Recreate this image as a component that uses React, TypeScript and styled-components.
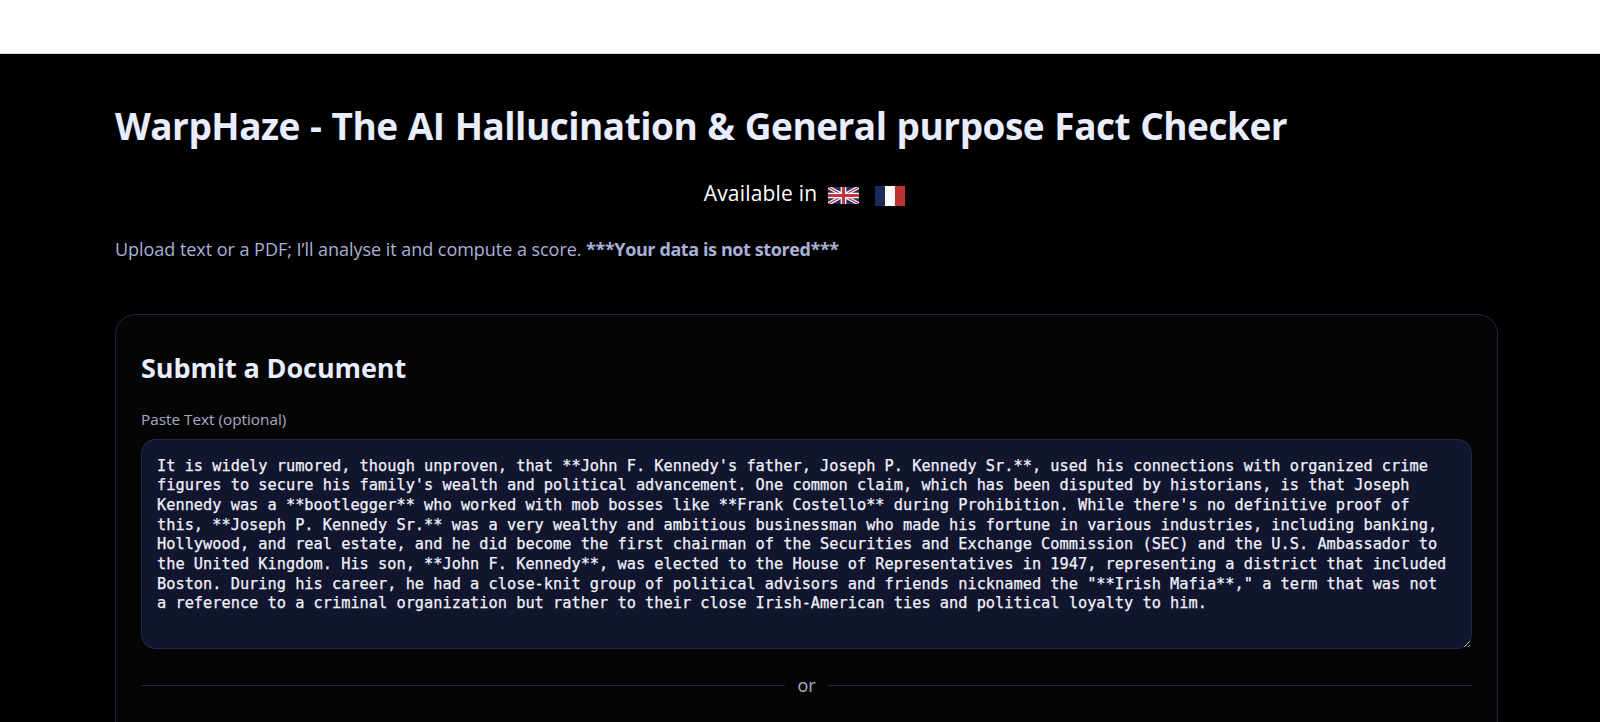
import React from "react";
import styled, { createGlobalStyle } from "styled-components";

const Global = createGlobalStyle`
  html, body { margin: 0; padding: 0; height: 100%; overflow: hidden; background: #000; }
  #root { height: 100%; }
  * { box-sizing: border-box; }
`;

const Page = styled.div`
  height: 722px;
  overflow: hidden;
  background: #000;
  font-family: "Open Sans", "Noto Sans", sans-serif;
`;

const TopBar = styled.header`
  height: 54px;
  background: #fff;
  border-bottom: 1px solid #dcdcdc;
`;

const Main = styled.main`
  padding: 49px 102px 0 115px;
`;

const Title = styled.h1`
  margin: 0;
  font-size: 37px;
  line-height: 46px;
  font-weight: 700;
  color: #e8edff;
  letter-spacing: -0.5px;
  word-spacing: 1px;
  white-space: nowrap;
`;

const Languages = styled.div`
  display: flex;
  justify-content: center;
  align-items: center;
  gap: 11px;
  margin-top: 30px;
  padding-right: 4px;
  height: 28px;
  font-size: 21px;
  color: #fff;
  letter-spacing: 0.2px;
`;

const FlagRow = styled.span`
  display: flex;
  align-items: center;
  gap: 16px;
  margin-top: 5px;
`;

const Intro = styled.p`
  margin: 30px 0 0;
  font-size: 18px;
  line-height: 24px;
  color: #a9b1d6;
  letter-spacing: -0.04px;
  b { font-weight: 700; letter-spacing: -0.4px; }
`;

const Card = styled.section`
  margin-top: 53px;
  height: 500px;
  padding: 35px 25px 22px;
  background: #050506;
  border: 1px solid #23263f;
  border-radius: 20px;
`;

const CardTitle = styled.h2`
  margin: 0;
  font-size: 27px;
  line-height: 36px;
  font-weight: 700;
  color: #e8edff;
  letter-spacing: -0.1px;
`;

const Label = styled.label`
  display: block;
  margin-top: 23px;
  font-size: 15.3px;
  line-height: 20px;
  color: #a6abc2;
  letter-spacing: 0;
`;

const TextArea = styled.textarea`
  display: block;
  width: 100%;
  height: 210px;
  margin-top: 10px;
  padding: 16.5px 20px 15px 15px;
  background: #12152e;
  border: 1px solid #23274a;
  border-radius: 14px;
  color: #f0f2fa;
  font-family: "DejaVu Sans Mono", "Liberation Mono", monospace;
  font-size: 15.31px;
  line-height: 19.7px;
  font-weight: 400;
  -webkit-text-stroke: 0.25px #f0f2fa;
  outline: none;
  resize: vertical;
  overflow: hidden;
`;

const Divider = styled.div`
  display: flex;
  align-items: center;
  gap: 12px;
  margin-top: 24px;
  font-size: 18px;
  line-height: 24px;
  color: #a9aec4;
  &::before, &::after {
    content: "";
    flex: 1;
    height: 1px;
    background: #272a42;
  }
`;

const UkFlag = () => (
  <svg width="31" height="17" viewBox="0 0 60 33" aria-label="United Kingdom">
    <rect width="60" height="33" fill="#1f2f66" />
    <path d="M0 0L60 33M60 0L0 33" stroke="#fff" strokeWidth="7" />
    <path d="M0 0L60 33M60 0L0 33" stroke="#c8323c" strokeWidth="2.4" />
    <path d="M30 0V33M0 16.5H60" stroke="#fff" strokeWidth="11" />
    <path d="M30 0V33M0 16.5H60" stroke="#c8323c" strokeWidth="6" />
  </svg>
);

const FrFlag = () => (
  <svg width="30" height="20" viewBox="0 0 3 2" aria-label="France">
    <rect width="1" height="2" fill="#1c2a5c" />
    <rect x="1" width="1" height="2" fill="#fff" />
    <rect x="2" width="1" height="2" fill="#bd3333" />
  </svg>
);

const sample = `It is widely rumored, though unproven, that **John F. Kennedy's father, Joseph P. Kennedy Sr.**, used his connections with organized crime figures to secure his family's wealth and political advancement. One common claim, which has been disputed by historians, is that Joseph Kennedy was a **bootlegger** who worked with mob bosses like **Frank Costello** during Prohibition. While there's no definitive proof of this, **Joseph P. Kennedy Sr.** was a very wealthy and ambitious businessman who made his fortune in various industries, including banking, Hollywood, and real estate, and he did become the first chairman of the Securities and Exchange Commission (SEC) and the U.S. Ambassador to the United Kingdom. His son, **John F. Kennedy**, was elected to the House of Representatives in 1947, representing a district that included Boston. During his career, he had a close-knit group of political advisors and friends nicknamed the "**Irish Mafia**," a term that was not a reference to a criminal organization but rather to their close Irish-American ties and political loyalty to him.`;

export default function App() {
  return (
    <Page>
      <Global />
      <TopBar />
      <Main>
        <Title>WarpHaze - The AI Hallucination &amp; General purpose Fact Checker</Title>
        <Languages>
          <span>Available in</span>
          <FlagRow>
            <UkFlag />
            <FrFlag />
          </FlagRow>
        </Languages>
        <Intro>
          Upload text or a PDF; I’ll analyse it and compute a score. <b>***Your data is not stored***</b>
        </Intro>
        <Card>
          <CardTitle>Submit a Document</CardTitle>
          <Label htmlFor="doc">Paste Text (optional)</Label>
          <TextArea id="doc" defaultValue={sample} spellCheck={false} />
          <Divider>or</Divider>
        </Card>
      </Main>
    </Page>
  );
}
